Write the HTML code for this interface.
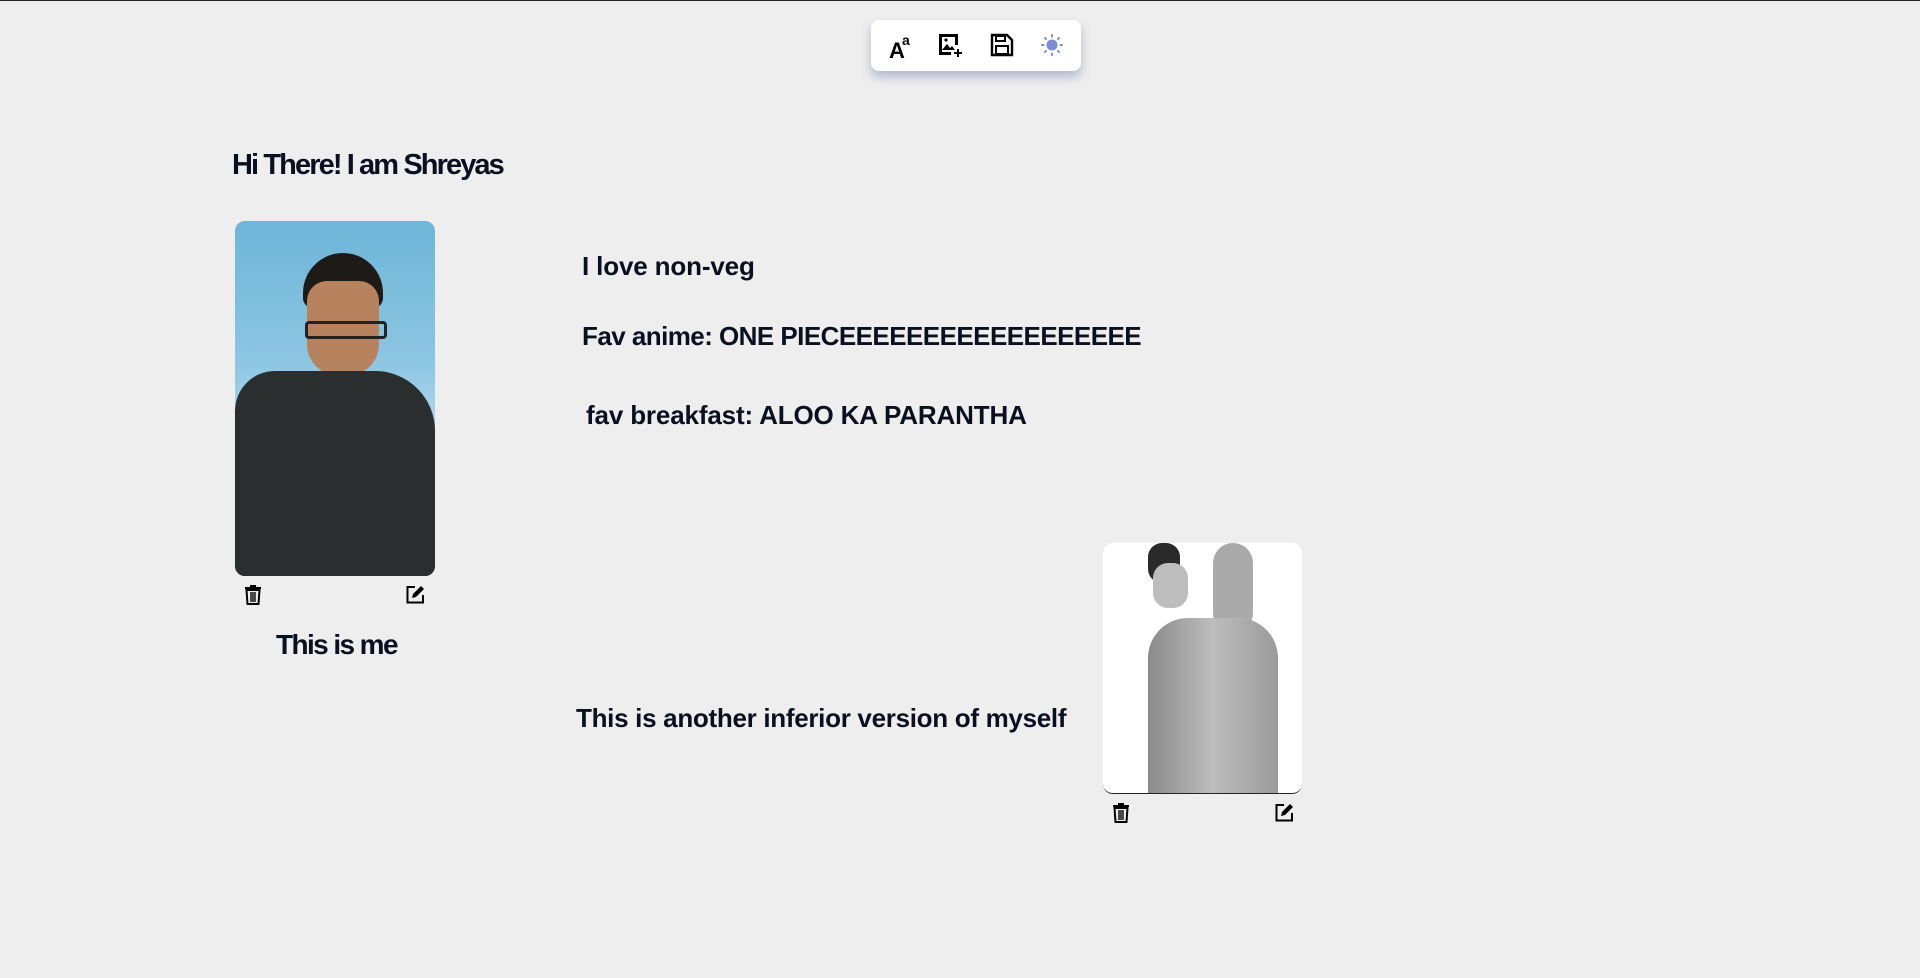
<!DOCTYPE html>
<html><head><meta charset="utf-8"><style>
html,body{margin:0;padding:0}
body{width:1920px;height:978px;background:#eeeeee;position:relative;overflow:hidden;font-family:"Liberation Sans",sans-serif;color:#0b1020;border-top:1px solid #222;box-sizing:border-box}
.t{position:absolute;font-weight:700;white-space:nowrap;letter-spacing:-1px;line-height:1}
.bar{position:absolute;left:871px;top:19px;width:210px;height:51px;background:#fff;border-radius:8px;box-shadow:0 6px 10px rgba(110,120,170,.45)}
.bar svg{position:absolute;top:13px}
.img{position:absolute;border-radius:10px;overflow:hidden}
.ic{position:absolute}
</style></head><body>
<div class="bar">
<svg style="left:18px" width="26" height="26" viewBox="0 0 26 26"><text x="0" y="25" font-family="Liberation Sans" font-weight="700" font-size="22" fill="#000">A</text><text x="13" y="12" font-family="Liberation Sans" font-weight="700" font-size="14" fill="#000">a</text></svg>
<svg style="left:67px" width="26" height="26" viewBox="0 0 26 26"><path d="M1 1h19v11h-3V4H4v15h9v3H1z" fill="#000"/><path d="M4 17l5-6 3 4 2-2 3 4z" fill="#000"/><circle cx="8" cy="7" r="1.6" fill="#000"/><path d="M20 16v8M16 20h8" stroke="#000" stroke-width="2"/></svg>
<svg style="left:119px" width="24" height="24" viewBox="0 0 24 24"><path d="M2 2h15l5 5v15H2z" fill="none" stroke="#000" stroke-width="2.4"/><rect x="6" y="3" width="9" height="5" fill="none" stroke="#000" stroke-width="2"/><rect x="6" y="13" width="12" height="8" fill="none" stroke="#000" stroke-width="2"/></svg>
<svg style="left:169px" width="24" height="24" viewBox="0 0 24 24" fill="#7c8bd6"><circle cx="12" cy="12" r="5.5"/><g stroke="#7c8bd6" stroke-width="2" stroke-linecap="round"><path d="M12 2v1.5M12 20.5V22M2 12h1.5M20.5 12H22M5 5l1 1M18 18l1 1M5 19l1-1M18 6l1-1"/></g></svg>
</div>

<div class="t" style="left:232px;top:150px;font-size:29px;letter-spacing:-1.9px">Hi There! I am Shreyas</div>

<div class="img" style="left:235px;top:220px;width:200px;height:355px;background:linear-gradient(180deg,#6eb5d8 0%,#8cc6e2 40%,#a9d6ea 55%,#3d3f3f 65%,#2a2d2c 100%)">
<div style="position:absolute;left:68px;top:32px;width:80px;height:55px;background:#1e1a18;border-radius:40px 40px 10px 10px"></div>
<div style="position:absolute;left:72px;top:60px;width:72px;height:95px;background:#b7825e;border-radius:20px 20px 32px 32px"></div>
<div style="position:absolute;left:70px;top:100px;width:82px;height:18px;border:3px solid #222;border-radius:4px;box-sizing:border-box"></div>
<div style="position:absolute;left:0;top:150px;width:200px;height:205px;background:#2b2e2e;border-radius:40px 60px 0 0"></div>
</div>
<svg class="ic" style="left:244px;top:583px" width="18" height="21" viewBox="0 0 18 21"><path d="M6 1h6v2h5v2H1V3h5z" fill="#000"/><path d="M2.5 6h13l-1 14h-11z" fill="none" stroke="#000" stroke-width="2"/><path d="M7 8v10M9 8v10M11 8v10" stroke="#000" stroke-width="1.4"/></svg>
<svg class="ic" style="left:406px;top:583px" width="19" height="20" viewBox="0 0 19 20"><path d="M9 3H1.5v15.5H17V11" fill="none" stroke="#000" stroke-width="2"/><path d="M6 14l1-4 8-8 3 3-8 8z" fill="#000"/></svg>
<div class="t" style="left:276px;top:630px;font-size:28px;letter-spacing:-1.6px">This is me</div>

<div class="t" style="left:582px;top:252px;font-size:26px;letter-spacing:-0.15px">I love non-veg</div>
<div class="t" style="left:582px;top:322px;font-size:26px;letter-spacing:-0.55px">Fav anime: ONE PIECEEEEEEEEEEEEEEEEEE</div>
<div class="t" style="left:586px;top:401px;font-size:26px;letter-spacing:-0.15px">fav breakfast: ALOO KA PARANTHA</div>
<div class="t" style="left:576px;top:704px;font-size:26px;letter-spacing:-0.3px">This is another inferior version of myself</div>

<div class="img" style="left:1103px;top:542px;width:199px;height:250px;background:#fff;border-bottom:1px solid #222">
<div style="position:absolute;left:45px;top:0;width:32px;height:40px;background:#2a2a2a;border-radius:14px"></div>
<div style="position:absolute;left:50px;top:20px;width:35px;height:45px;background:#bdbdbd;border-radius:15px"></div>
<div style="position:absolute;left:110px;top:0;width:40px;height:90px;background:#aaa;border-radius:20px"></div>
<div style="position:absolute;left:45px;top:75px;width:130px;height:180px;background:linear-gradient(90deg,#8a8a8a,#bdbdbd,#9a9a9a);border-radius:40px 40px 0 0"></div>
</div>
<svg class="ic" style="left:1112px;top:801px" width="18" height="21" viewBox="0 0 18 21"><path d="M6 1h6v2h5v2H1V3h5z" fill="#000"/><path d="M2.5 6h13l-1 14h-11z" fill="none" stroke="#000" stroke-width="2"/><path d="M7 8v10M9 8v10M11 8v10" stroke="#000" stroke-width="1.4"/></svg>
<svg class="ic" style="left:1275px;top:801px" width="19" height="20" viewBox="0 0 19 20"><path d="M9 3H1.5v15.5H17V11" fill="none" stroke="#000" stroke-width="2"/><path d="M6 14l1-4 8-8 3 3-8 8z" fill="#000"/></svg>
</body></html>
